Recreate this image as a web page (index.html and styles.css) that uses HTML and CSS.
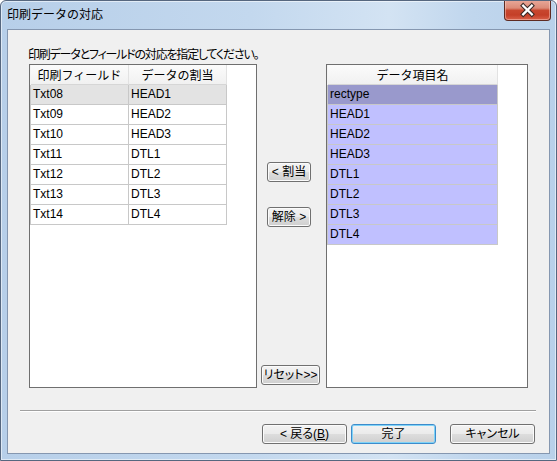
FILE: index.html
```html
<!DOCTYPE html>
<html lang="ja">
<head>
<meta charset="utf-8">
<title>印刷データの対応</title>
<link rel="stylesheet" href="styles.css">
</head>
<body>
<div class="window">
  <div class="titlebar">
    <span class="title">印刷データの対応</span>
    <div class="close">
      <svg width="47" height="20" viewBox="0 0 47 20">
        <path d="M19 5.5 L28 14.5 M28 5.5 L19 14.5" stroke="#3a2a28" stroke-width="4.6" stroke-linecap="square" fill="none"/>
        <path d="M19 5.5 L28 14.5 M28 5.5 L19 14.5" stroke="#ffffff" stroke-width="2.4" stroke-linecap="square" fill="none"/>
      </svg>
    </div>
  </div>
  <div class="client">
    <p class="label">印刷データとフィールドの対応を指定してください。</p>
    <div class="main">
      <div class="listbox listbox-left">
        <div class="grid grid-left">
          <div class="row head"><div class="cell">印刷フィールド</div><div class="cell">データの割当</div></div>
          <div class="row sel"><div class="cell">Txt08</div><div class="cell">HEAD1</div></div>
          <div class="row"><div class="cell">Txt09</div><div class="cell">HEAD2</div></div>
          <div class="row"><div class="cell">Txt10</div><div class="cell">HEAD3</div></div>
          <div class="row"><div class="cell">Txt11</div><div class="cell">DTL1</div></div>
          <div class="row"><div class="cell">Txt12</div><div class="cell">DTL2</div></div>
          <div class="row"><div class="cell">Txt13</div><div class="cell">DTL3</div></div>
          <div class="row"><div class="cell">Txt14</div><div class="cell">DTL4</div></div>
        </div>
      </div>
      <div class="middle">
        <button class="btn btn-assign">&lt; 割当</button>
        <button class="btn btn-remove">解除 &gt;</button>
        <button class="btn btn-reset">リセット&gt;&gt;</button>
      </div>
      <div class="listbox listbox-right">
        <div class="grid grid-right">
          <div class="row head"><div class="cell">データ項目名</div></div>
          <div class="row sel"><div class="cell">rectype</div></div>
          <div class="row"><div class="cell">HEAD1</div></div>
          <div class="row"><div class="cell">HEAD2</div></div>
          <div class="row"><div class="cell">HEAD3</div></div>
          <div class="row"><div class="cell">DTL1</div></div>
          <div class="row"><div class="cell">DTL2</div></div>
          <div class="row"><div class="cell">DTL3</div></div>
          <div class="row"><div class="cell">DTL4</div></div>
        </div>
      </div>
    </div>
    <div class="sep"></div>
    <div class="footer">
      <button class="btn btn-wide">&lt; 戻る(<u>B</u>)</button>
      <button class="btn btn-wide btn-default">完了</button>
      <button class="btn btn-wide btn-cancel">キャンセル</button>
    </div>
  </div>
</div>
</body>
</html>
```

FILE: styles.css
```css
html, body {
  margin: 0;
  padding: 0;
  background: #ffffff;
}

body {
  font-family: "Liberation Sans", "Noto Sans CJK JP", sans-serif;
  font-size: 12px;
  color: #000000;
}

.window {
  box-sizing: border-box;
  width: 557px;
  height: 461px;
  border: 1px solid #56677f;
  border-radius: 6px 6px 0 0;
  background: linear-gradient(to right, #b7cfe9 0%, #c3d8ee 45%, #d3e3f3 70%, #c0d6ed 85%, #b9d1ea 100%);
  box-shadow: inset 0 0 0 1px rgba(255, 255, 255, 0.55);
  display: flex;
  flex-direction: column;
  overflow: hidden;
}

.titlebar {
  height: 28px;
  display: flex;
  align-items: flex-start;
  flex: none;
}

.title {
  font-family: "Noto Sans CJK JP", sans-serif;
  font-size: 12px;
  line-height: 15px;
  padding: 5px 0 0 6px;
  color: #000000;
}

.close {
  margin-left: auto;
  margin-right: 5px;
  margin-top: -1px;
  width: 47px;
  height: 21px;
  box-sizing: border-box;
  border: 1px solid #5e2b22;
  border-top: none;
  border-radius: 0 0 4px 4px;
  background: linear-gradient(#e9a99a 0%, #dc8b78 40%, #c8472f 52%, #c43f28 75%, #d9614a 100%);
  box-shadow: inset 0 0 0 1px rgba(255, 220, 210, 0.45);
  display: flex;
  align-items: center;
  justify-content: center;
}

.close svg {
  display: block;
  margin-top: -1px;
}

.client {
  box-sizing: border-box;
  margin: 0 6px 6px 6px;
  height: 425px;
  border: 1px solid #8597b0;
  background: #f0f0f0;
  display: flex;
  flex-direction: column;
}

.label {
  margin: 17px 0 0 20px;
  height: 14px;
  line-height: 14px;
  font-family: "Noto Sans CJK JP", sans-serif;
  font-feature-settings: "palt";
  letter-spacing: -1.2px;
  white-space: nowrap;
}

.main {
  display: flex;
  margin: 3px 0 0 21px;
  height: 324px;
}

.listbox {
  box-sizing: border-box;
  height: 324px;
  border: 1px solid #6f6f6f;
  background: #ffffff;
}

.listbox-left {
  width: 228px;
}

.listbox-right {
  width: 202px;
}

.middle {
  width: 69px;
  display: flex;
  flex-direction: column;
  align-items: flex-start;
  padding-top: 98px;
  box-sizing: border-box;
}

.grid .row {
  display: grid;
  border-left: 1px solid #c8c8c8;
}

.grid-left .row {
  grid-template-columns: 98px 98px;
  width: 197px;
}

.grid-right .row {
  grid-template-columns: 170px;
  width: 171px;
}

.grid .cell {
  box-sizing: border-box;
  height: 20px;
  line-height: 19px;
  padding-left: 2px;
  border-right: 1px solid #c8c8c8;
  border-bottom: 1px solid #c8c8c8;
  white-space: nowrap;
  overflow: hidden;
}

.grid .row.head {
  border-left: 1px solid #f4f4f4;
}

.grid .head .cell {
  font-family: "Noto Sans CJK JP", sans-serif;
  text-align: center;
  padding-left: 0;
  background: linear-gradient(#fbfbfb, #f1f1f1);
  border-right: 1px solid #e2e2e2;
  border-bottom: 1px solid #d6d6d6;
  line-height: 19px;
}

.grid-left .sel .cell {
  background: #e3e3e3;
}

.grid-right .row .cell {
  background: #c0c0ff;
}

.grid-right .row.sel .cell {
  background: #9999cc;
}

.grid-right .row.head .cell {
  background: linear-gradient(#fbfbfb, #f1f1f1);
}

.btn {
  box-sizing: border-box;
  height: 20px;
  padding: 0;
  margin: 0;
  border: 1px solid #707070;
  border-radius: 3px;
  background: linear-gradient(#f3f3f3 0%, #ebebeb 48%, #dddddd 52%, #cfcfcf 100%);
  box-shadow: inset 0 0 0 1px #fbfbfb;
  font-family: "Liberation Sans", "Noto Sans CJK JP", sans-serif;
  font-feature-settings: "palt";
  font-size: 12px;
  line-height: 16px;
  color: #000000;
  display: flex;
  align-items: center;
  justify-content: center;
  white-space: nowrap;
}

.btn u {
  text-decoration: underline;
}

.btn-assign {
  width: 44px;
  margin-left: 10px;
}

.btn-remove {
  width: 44px;
  margin-left: 10px;
  margin-top: 25px;
}

.btn-reset {
  width: 59px;
  margin-left: 4px;
  margin-top: auto;
  margin-bottom: 3px;
}

.sep {
  margin: 22px 0 0 12px;
  width: 516px;
  height: 0;
  border-top: 1px solid #a0a0a0;
  border-bottom: 1px solid #ffffff;
}

.footer {
  display: flex;
  justify-content: flex-end;
  margin-top: 12px;
  padding-right: 14px;
}

.btn-wide {
  width: 85px;
}

.btn-default {
  margin-left: 4px;
  border-color: #3c8ccc;
  box-shadow: inset 0 0 0 1px #7fd3f7;
}

.btn-cancel {
  margin-left: 14px;
}
```
